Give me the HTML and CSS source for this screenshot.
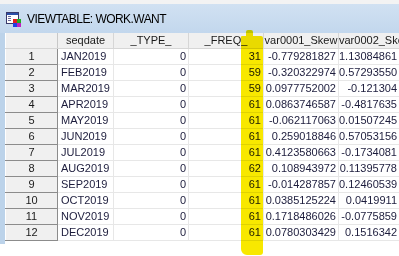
FILE: index.html
```html
<!DOCTYPE html>
<html>
<head>
    <title>VIEWTABLE: WORK.WANT</title>
    <link rel="stylesheet" href="styles.css">
</head>
<body>
    <div class="window">
        <div class="titlebar">
            <svg class="app-icon" width="16" height="16" viewBox="0 0 16 16">
                <rect x="0.5" y="1.5" width="12" height="11" fill="#ffffff" stroke="#3a3a6a"/>
                <rect x="1" y="2" width="11" height="2" fill="#2b4fa8"/>
                <rect x="2" y="5" width="3" height="1" fill="#6a6a9a"/>
                <rect x="2" y="7" width="3" height="1" fill="#6a6a9a"/>
                <rect x="2" y="9" width="3" height="1" fill="#6a6a9a"/>
                <rect x="7" y="8" width="4" height="4" fill="#e02020"/>
                <rect x="11" y="8" width="4" height="4" fill="#20b020"/>
                <rect x="7" y="12" width="4" height="4" fill="#2040e0"/>
                <rect x="11" y="12" width="4" height="4" fill="#c020c0"/>
            </svg>
            <span class="title">VIEWTABLE: WORK.WANT</span>
        </div>

        <div class="frame">
            <table class="grid">
                <colgroup>
                    <col class="c-row">
                    <col class="c-date">
                    <col class="c-num">
                    <col class="c-num">
                    <col class="c-num">
                    <col class="c-last">
                </colgroup>
                <thead>
                    <tr>
                        <th class="corner"></th>
                        <th>seqdate</th>
                        <th>_TYPE_</th>
                        <th>_FREQ_</th>
                        <th>var0001_Skew</th>
                        <th>var0002_Skew</th>
                    </tr>
                </thead>
                <tbody>
                    <tr><th class="rownum">1</th><td class="txt">JAN2019</td><td>0</td><td>31</td><td>-0.779281827</td><td>1.13084861</td></tr>
                    <tr><th class="rownum">2</th><td class="txt">FEB2019</td><td>0</td><td>59</td><td>-0.320322974</td><td>0.57293550</td></tr>
                    <tr><th class="rownum">3</th><td class="txt">MAR2019</td><td>0</td><td>59</td><td>0.0977752002</td><td>-0.121304</td></tr>
                    <tr><th class="rownum">4</th><td class="txt">APR2019</td><td>0</td><td>61</td><td>0.0863746587</td><td>-0.4817635</td></tr>
                    <tr><th class="rownum">5</th><td class="txt">MAY2019</td><td>0</td><td>61</td><td>-0.062117063</td><td>0.01507245</td></tr>
                    <tr><th class="rownum">6</th><td class="txt">JUN2019</td><td>0</td><td>61</td><td>0.259018846</td><td>0.57053156</td></tr>
                    <tr><th class="rownum">7</th><td class="txt">JUL2019</td><td>0</td><td>61</td><td>0.4123580663</td><td>-0.1734081</td></tr>
                    <tr><th class="rownum">8</th><td class="txt">AUG2019</td><td>0</td><td>62</td><td>0.108943972</td><td>0.11395778</td></tr>
                    <tr><th class="rownum">9</th><td class="txt">SEP2019</td><td>0</td><td>61</td><td>-0.014287857</td><td>0.12460539</td></tr>
                    <tr><th class="rownum">10</th><td class="txt">OCT2019</td><td>0</td><td>61</td><td>0.0385125224</td><td>0.0419911</td></tr>
                    <tr><th class="rownum">11</th><td class="txt">NOV2019</td><td>0</td><td>61</td><td>0.1718486026</td><td>-0.0775859</td></tr>
                    <tr><th class="rownum">12</th><td class="txt">DEC2019</td><td>0</td><td>61</td><td>0.0780303429</td><td>0.1516342</td></tr>
                </tbody>
            </table>
        </div>
    </div>

    <!-- highlighter stroke drawn over the _FREQ_ column -->
    <div class="marker">
        <div class="marker-tab"></div>
        <div class="marker-body"></div>
    </div>
</body>
</html>
```

FILE: styles.css
```css
* {
    margin: 0;
    padding: 0;
    box-sizing: border-box;
}

body {
    background: #ffffff;
    font-family: 'Liberation Sans', Arial, sans-serif;
    width: 399px;
    height: 256px;
    overflow: hidden;
    position: relative;
}

.window {
    width: 399px;
    padding-top: 4px;
    background: #f3f3f3;
}

.titlebar {
    height: 29px;
    display: flex;
    align-items: center;
    gap: 5px;
    padding-left: 6px;
    background: linear-gradient(180deg, #d1e1f2 0%, #c2d7ed 100%);
}

.app-icon {
    flex: none;
}

.title {
    font-size: 12px;
    letter-spacing: -0.55px;
    color: #000000;
    white-space: nowrap;
}

.frame {
    border-left: 5px solid #bcd3ea;
    padding-bottom: 3px;
    background: #ffffff;
}

.grid {
    table-layout: fixed;
    border-collapse: collapse;
    width: 394px;
    font-size: 11px;
    color: #1c1c3c;
}

.c-row { width: 52px; }
.c-date { width: 56px; }
.c-num { width: 75px; }
.c-last { width: 61px; }

thead th {
    height: 15px;
    background: #f0f0f0;
    font-weight: normal;
    color: #1a1a1a;
    border-right: 1px solid #d6d6d6;
    border-bottom: 1px solid #d6d6d6;
    text-align: center;
    white-space: nowrap;
    overflow: hidden;
    line-height: 14px;
}

thead th.corner {
    border-right: 1px solid #c8c8c8;
}

.rownum {
    height: 16px;
    background: #f0f0f0;
    font-weight: normal;
    color: #1a1a1a;
    text-align: center;
    border-top: 1px solid #ffffff;
    border-left: 1px solid #ffffff;
    border-right: 1px solid #8c8c8c;
    border-bottom: 1px solid #8c8c8c;
    line-height: 14px;
}

td {
    height: 16px;
    text-align: right;
    padding-right: 2px;
    border-right: 1px solid #e7e7e7;
    border-bottom: 1px solid #e7e7e7;
    white-space: nowrap;
    overflow: hidden;
    line-height: 14px;
}

td.txt {
    text-align: left;
    padding-left: 3px;
}

.marker {
    position: absolute;
    left: 241px;
    top: 30px;
    width: 22px;
    height: 225px;
    mix-blend-mode: multiply;
}

.marker-tab {
    margin-left: 5px;
    width: 7px;
    height: 6px;
    background: #f8e800;
    border-radius: 2px 2px 0 0;
}

.marker-body {
    height: 219px;
    background: #f8e800;
    border-radius: 1px 2px 3px 6px;
}
```
